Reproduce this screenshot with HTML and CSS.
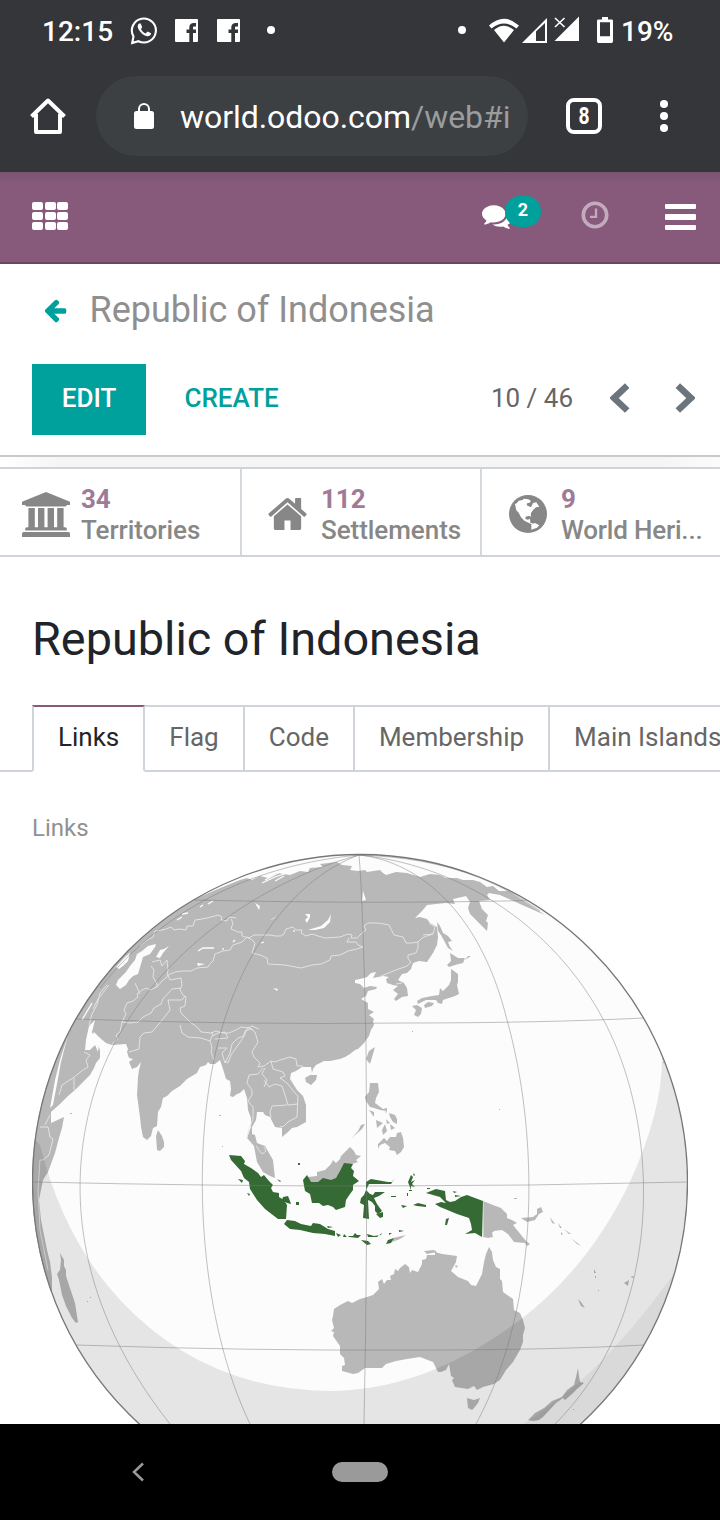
FILE: index.html
```html
<!DOCTYPE html>
<html lang="en">
<head>
<meta charset="utf-8">
<title>Republic of Indonesia</title>
<link rel="stylesheet" href="styles.css">
</head>
<body>
<div class="screen">
  <header class="status">
    <span class="time">12:15</span>
    <svg class="wa" width="28" height="29" viewBox="0 0 28 29"><path d="M2.200 27 3.500 20.500A12 12 0 1 1 8.500 25.200Z" fill="none" stroke="#fff" stroke-width="2.100"/><path d="M9 7.500C7 9 7.500 11.500 9 14c2 3.300 5 5.700 8 6.300 2 .3 4-1 4.200-3L17.500 15.500 15.700 17.500C13.500 16.500 12 15 11 13L12.200 11.200 10.700 7.500Z" fill="#fff"/></svg>
    <svg class="fb" width="23" height="23" viewBox="0 0 23 23"><path fill="#fff" d="M1 0H22a1 1 0 0 1 1 1V22a1 1 0 0 1-1 1H18V14H21V10.500H18V8.500Q18 7.500 19 7.500H21V4H19Q14.300 4 14.300 8.500V10.500H11.500V14H14.300V23H1a1 1 0 0 1-1-1V1a1 1 0 0 1 1-1Z"/></svg>
    <svg class="fb2" width="23" height="23" viewBox="0 0 23 23"><path fill="#fff" d="M1 0H22a1 1 0 0 1 1 1V22a1 1 0 0 1-1 1H18V14H21V10.500H18V8.500Q18 7.500 19 7.500H21V4H19Q14.300 4 14.300 8.500V10.500H11.500V14H14.300V23H1a1 1 0 0 1-1-1V1a1 1 0 0 1 1-1Z"/></svg>
    <i class="dot"></i>
    <div class="status-right">
      <i class="dot"></i>
      <svg class="signals" width="92" height="28" viewBox="0 0 92 28"><path d="M0 9.500Q15-4 30 9.500L27.500 12.500Q15 2.500 2.500 12.500Z" fill="#fff"/><path d="M5 14Q15 5.500 25 14L15 26.500Z" fill="#fff"/><path fill="#fff" fill-rule="evenodd" d="M33 27 58 2V27ZM47 15.500V25H56V7Z"/><path d="M65.500 25 90 0.500V25Z" fill="#fff"/><path d="M66 2 75.500 11M75.500 2 66 11" stroke="#fff" stroke-width="1.600"/></svg>
      <svg class="battery" width="16" height="26" viewBox="0 0 16 27" preserveAspectRatio="none"><path fill="#fff" fill-rule="evenodd" d="M5 0H11V2.500H14.500Q16 2.500 16 4V25Q16 27 14.500 27H1.500Q0 27 0 25V4Q0 2.500 1.500 2.500H5ZM3 5.500V20H13V5.500Z"/></svg>
      <span class="percent">19%</span>
    </div>
  </header>

  <div class="browser">
    <svg class="home" width="36" height="36" viewBox="0 0 36 36"><path d="M1.500 18.500 18 2.500 34.500 18.500M6 16V34H30V16" fill="none" stroke="#fff" stroke-width="4" stroke-linejoin="round"/></svg>
    <div class="address">
      <svg width="20" height="26" viewBox="0 0 20 26"><rect y="8" width="20" height="18" rx="2.500" fill="#fff"/><path d="M5 9V6a5 5 0 0 1 10 0V9" fill="none" stroke="#fff" stroke-width="2"/></svg>
      <span class="url">world.odoo.com<span>/web#i</span></span>
    </div>
    <div class="tabcount"><span>8</span></div>
    <div class="kebab"><i></i><i></i><i></i></div>
  </div>

  <nav class="navbar">
    <div class="apps"><i></i><i></i><i></i><i></i><i></i><i></i><i></i><i></i><i></i></div>
    <div class="chat">
      <svg width="30" height="30" viewBox="0 0 1792 1792"><path fill="#fff" d="M1408 768q0 139-94 257t-256.500 186.500-353.500 68.500q-86 0-176-16-124 88-278 128-36 9-86 16h-3q-11 0-20.500-8t-11.500-21q-1-3-1-6.500t.5-6.500 2-6l2.500-5 3.500-5.500 4-5 4.500-5 4-4.500q5-6 23-25t26-29.500 22.500-29 25-38.500 20.500-44q-124-72-195-177t-71-224q0-139 94-257t256.500-186.500 353.500-68.500 353.500 68.500 256.500 186.500 94 257zm384 256q0 120-71 224.500t-195 176.500q10 24 20.500 44t25 38.500 22.500 29 26 29.500 23 25q1 1 4 4.500t4.500 5 4 5 3.500 5.500l2.500 5 2 6 .5 6.500-1 6.500q-3 14-13 22t-22 7q-50-7-86-16-154-40-278-128-90 16-176 16-271 0-472-132 58 4 88 4 161 0 309-45t264-129q125-92 192-212t67-254q0-77-23-152 129 71 204 178t75 230z"/></svg>
      <span class="badge">2</span>
    </div>
    <svg class="clock" width="28" height="28" viewBox="0 0 28 28"><g fill="none" stroke="#c3abbd"><circle cx="14" cy="14" r="11.700" stroke-width="3.600"/><path d="M15 7.500V15.800H9" stroke-width="2.300"/></g></svg>
    <div class="menu"><i></i><i></i><i></i></div>
  </nav>

  <section class="control">
    <div class="crumb">
      <svg width="26" height="26" viewBox="0 0 1792 1792"><path fill="#00a09d" d="M1536 896v128q0 53-32.500 90.500t-84.500 37.500h-704l293 294q38 36 38 90t-38 90l-75 76q-37 37-90 37-52 0-91-37l-651-652q-37-37-37-90 0-52 37-91l651-650q38-38 91-38 52 0 90 38l75 74q38 38 38 91t-38 91l-293 293h704q52 0 84.500 37.500t32.500 90.500z"/></svg>
      <span>Republic of Indonesia</span>
    </div>
    <div class="actions">
      <button class="edit">EDIT</button>
      <button class="create">CREATE</button>
      <span class="pager">10 / 46</span>
      <svg class="prev" width="20" height="30" viewBox="0 0 20 30"><path d="M17.200 2.700 4 15 17.200 27.500" fill="none" stroke="#6c757d" stroke-width="6.500"/></svg>
      <svg class="next" width="20" height="30" viewBox="0 0 20 30"><path d="M2.800 2.700 16 15 2.800 27.500" fill="none" stroke="#6c757d" stroke-width="6.500"/></svg>
    </div>
  </section>

  <div class="shade"></div>
  <section class="stats">
    <div class="stat">
      <svg class="bank" width="48" height="45" viewBox="0 0 1920 1792"><path d="M960 0l960 384v128h-128q0 26-20.500 45t-48.500 19h-1526q-28 0-48.500-19t-20.500-45h-128v-128zm-704 640h256v768h128v-768h256v768h128v-768h256v768h128v-768h256v768h59q28 0 48.500 19t20.500 45v64h-1664v-64q0-26 20.500-45t48.500-19h59v-768zm1595 960q28 0 48.500 19t20.500 45v128h-1920v-128q0-26 20.500-45t48.500-19h1782z"/></svg>
      <p><b>34</b>Territories</p>
    </div>
    <div class="stat">
      <svg class="house" width="39" height="32" viewBox="73 253 1646 1283" preserveAspectRatio="none"><path d="M1472 992v480q0 26-19 45t-45 19h-384v-384h-256v384h-384q-26 0-45-19t-19-45v-480q0-1 .5-3t.5-3l575-474 575 474q1 2 1 6zm223-69l-62 74q-8 9-21 11h-3q-13 0-21-7l-692-577-692 577q-12 8-24 7-13-2-21-11l-62-74q-8-10-7-23.500t11-21.500l719-599q32-26 76-26t76 26l244 204v-195q0-14 9-23t23-9h192q14 0 23 9t9 23v408l219 182q10 8 11 21.500t-7 23.500z"/></svg>
      <p><b>112</b>Settlements</p>
    </div>
    <div class="stat">
      <svg class="world" width="38" height="38" viewBox="0 0 114 114"><circle cx="57" cy="57" r="57"/><path fill="#fff" d="M18 27 24 24 29 17 41 15 44 11 58 13 66 18 62 23 55 24 53 31 66 37 72 24 82 22 91 35 81 37 73 44 66 54 65 66 60 62 50 65 49 72 57 74 63 71 64 83 75 87 66 87 46 77 36 67 29 53 22 46ZM67 88 78 84 91 91 84 98 67 104Z"/></svg>
      <p><b>9</b>World Heri...</p>
    </div>
  </section>

  <main class="sheet">
    <h1>Republic of Indonesia</h1>
    <div class="tabs">
      <span class="tab active">Links</span><span class="tab">Flag</span><span class="tab">Code</span><span class="tab">Membership</span><span class="tab">Main Islands</span>
    </div>
    <div class="label">Links</div>
    <svg class="globe" width="656" height="572" viewBox="32 852 656 572">
      <defs><clipPath id="disc"><circle cx="360" cy="1182" r="328"/></clipPath></defs>
      <g clip-path="url(#disc)">
        <rect x="32" y="852" width="656" height="572" fill="#fcfcfc"/>
        <g fill="#b8b8b8">
          <path d="M240 880 247 878 252 880 260 876 268 878 277 873 290 875 300 871 308 872 310 868 323 867 320 864 337 862 342 865 352 866 350 870 358 871 365 870 367 872 380 870 383 873 386 875 396 872 407 873 420 877 430 874 440 875 446 878 457 878 463 880 473 880 480 882 487 887 493 886 499 891 508 891 530 905 545 915 520 904 500 895 489 893 487 895 490 900 479 901 482 909 488 915 486 921 488 923 487 931 478 922 470 914 468 908 470 902 466 896 462 897 453 899 455 904 446 903 436 904 427 905 422 911 415 918 420 917 427 919 430 923 437 927 438 937 437 945 433 953 427 962 419 961 413 963 411 969 407 973 402 974 398 980 404 983 407 988 408 996 402 997 396 1001 394 999 398 994 393 990 398 986 393 985 387 983 386 979 389 977 383 976 373 978 376 972 371 973 367 977 360 979 355 980 355 983 360 984 364 988 370 986 377 987 376 989 368 991 366 996 361 999 368 1003 368 1009 374 1012 369 1015 374 1019 373 1022 374 1025 371 1030 369 1036 364 1043 358 1049 355 1050 350 1054 345 1057 340 1059 330 1061 324 1061 316 1065 313 1069 312 1073 311 1067 302 1067 296 1071 291 1073 290 1079 297 1090 303 1096 306 1105 306 1122 297 1127 292 1128 288 1132 282 1137 282 1128 275 1127 270 1117 265 1115 263 1112 257 1112 256 1120 252 1127 252 1134 255 1135 257 1143 265 1146 273 1160 275 1178 270 1176 263 1172 257 1162 254 1146 247 1138 251 1127 251 1118 248 1110 247 1098 244 1089 240 1093 237 1094 233 1097 230 1096 231 1089 230 1081 226 1079 223 1069 220 1060 215 1064 210 1064 208 1062 206 1065 200 1067 197 1073 187 1079 180 1086 172 1091 167 1096 163 1098 161 1107 158 1112 157 1126 153 1128 151 1136 147 1140 143 1137 141 1127 140 1117 137 1095 138 1077 139 1070 141 1062 137 1067 132 1069 129 1062 133 1059 129 1058 127 1052 128 1049 126 1044 112 1045 106 1043 100 1038 94 1032 91 1038 93 1042 96 1040 100 1050 100 1058 96 1063 94 1068 90 1075 84 1081 75 1090 68 1096 60 1104 51 1112 51 1123 64 1117 62 1128 59 1138 55 1153 48 1172 43 1180 39 1200 41 1220 47 1250 50 1262 52 1277 52 1292 10 1292 20 1120 50 1030 120 940 197 898 225 886Z"/>
          <path d="M60 1253 64 1260 64 1266 66 1270 66 1276 70 1288 75 1303 78 1322 76 1323 72 1318 66 1306 62 1295 59 1280 57 1274 60 1270 61 1260ZM158 1130 162 1136 164 1142 164 1147 160 1151 157 1150 156 1136Z"/>
          <path d="M375 1047 373 1054 370 1064 366 1059 369 1051ZM305 1078 310 1075 317 1075 316 1080 311 1085 306 1082ZM437 922 440 926 443 933 448 936 452 941 448 942 450 947 453 951 448 948 441 935 438 931ZM450 953 458 958 465 958 463 963 455 965 449 967 447 965 451 961ZM465 960 468 956 471 956ZM471 955 474 952ZM451 969 454 971 458 974 458 982 457 985 459 994 455 996 449 998 443 1000 442 1004 438 1003 436 1000 426 1000 418 1004 417 1001 422 998 432 996 439 995 440 988 443 991 449 985 451 980ZM412 1006 417 1005 422 1008 421 1014 418 1017 414 1015 416 1010ZM424 1005 428 1002 434 1003 432 1006 425 1008Z"/>
          <path d="M370 1083 378 1083 379 1092 376 1098 375 1103 383 1109 387 1108 387 1111 380 1110 374 1108 370 1107 366 1101 365 1097 369 1092ZM369 1110 374 1112 374 1117ZM385 1108 387 1110 386 1114ZM376 1120 383 1123 377 1128ZM389 1113 395 1115 397 1119 397 1124 393 1122 390 1117ZM382 1130 385 1124 387 1131 383 1135ZM386 1119 390 1123 387 1124ZM390 1124 395 1128 391 1130ZM378 1149 378 1144 384 1138 387 1141 390 1137 396 1137 397 1133 401 1132 403 1138 404 1147 401 1152 397 1155 395 1151 389 1150 390 1147 385 1143 380 1145ZM351 1139 358 1131 361 1125 365 1124 362 1129 354 1136Z"/>
          <path d="M308 1177 317 1176 317 1172 325 1170 331 1164 333 1160 336 1163 340 1159 341 1156 346 1151 350 1147 354 1151 356 1155 361 1156 356 1160 358 1162 352 1164 344 1164 340 1173 335 1180 326 1180 320 1182 310 1182Z"/>
          <path d="M483 1201 493 1205 501 1208 507 1214 507 1218 512 1220 517 1223 513 1225 517 1230 526 1241 530 1244 527 1246 525 1243 514 1242 508 1234 502 1230 494 1231 492 1233 493 1237 488 1238 483 1237ZM521 1218 533 1217 537 1214 537 1209 541 1207 543 1212 539 1214 535 1220 527 1222ZM550 1217 555 1224 552 1223ZM558 1223 562 1228 560 1228ZM561 1232 563 1234 561 1235ZM564 1229 571 1234 569 1234ZM571 1238 581 1246 577 1244ZM393 1238 406 1235 400 1239 392 1242ZM514 1198h3v1h-3Z"/>
          <path d="M332 1320 333 1316 334 1309 340 1305 348 1301 352 1303 360 1299 367 1297 373 1295 379 1289 378 1282 382 1279 384 1284 387 1280 391 1280 390 1276 394 1274 395 1269 398 1271 400 1268 405 1264 409 1267 410 1273 412 1270 418 1272 422 1264 422 1260 426 1259 427 1255 435 1255 435 1252 442 1254 457 1256 456 1262 451 1271 458 1277 468 1281 471 1285 476 1286 482 1274 484 1262 486 1254 489 1247 492 1252 493 1260 496 1267 500 1269 500 1279 502 1281 503 1292 513 1299 514 1310 520 1313 523 1320 525 1328 523 1335 523 1342 520 1350 513 1362 506 1370 500 1380 494 1384 483 1387 477 1390 474 1386 468 1389 455 1387 452 1380 454 1378 451 1376 449 1364 446 1370 441 1372 438 1372 433 1362 420 1357 407 1359 396 1361 386 1364 382 1368 365 1368 358 1373 353 1374 342 1371 342 1366 345 1365 344 1358 340 1354 340 1346 333 1336 334 1332 331 1331 334 1328ZM467 1398 474 1400 480 1398 478 1403 474 1408 472 1410 468 1408ZM424 1251 434 1250 437 1252 427 1254ZM455 1265 458 1266 456 1268Z"/>
          <path d="M578 1368 579 1376 580 1382 584 1383 577 1389 572 1394 565 1400 563 1398 556 1403 543 1417 539 1420 533 1421 528 1420 535 1413 544 1408 552 1401 562 1397 567 1390 574 1385 576 1377ZM578 1299 581 1302 585 1308 581 1306ZM624 1283 629 1280 628 1286ZM594 1269 596 1273 594 1273ZM595 1276h1v2h-1ZM631 1276 635 1277 632 1278ZM598 1290h1v1h-1ZM573 1409h1v1h-1Z"/>
          <path d="M219 1115h2v1h-2ZM222 1146h1v1h-1ZM499 1109h1v1h-1ZM412 1031h1v1h-1ZM70 1113h2v1h-2ZM87 1301h1v1h-1ZM90 1297h1v1h-1ZM663 1062h1v1h-1Z"/>
        </g>
        <g fill="#fcfcfc">
          <path d="M156 944 148 946 142 951 137 954 135 960 130 966 126 972 118 980 116 985 120 989 126 985 129 980 133 976 138 974 141 964 143 957 150 954 155 947ZM130 953 125 957 116 967 119 969 123 966 128 961ZM169 946 164 949 160 950 156 957 160 958 163 953ZM95 1020 89 1026 86 1040 85 1050 90 1050 98 1042 100 1038 94 1037 92 1032ZM100 1037 95 1045 98 1052ZM68 1035 60 1060 55 1080 50 1108 53 1105 57 1084 61 1062ZM90 1000 80 1017 83 1012Z"/>
          <path d="M331 914 328 920 321 926 308 930 315 930 324 928 330 922ZM305 914 310 914 310 917 307 923 305 920 308 917ZM363 891 366 900 362 901ZM273 988 278 989 277 991ZM197 963 205 964 198 966ZM270 920 277 916 273 919ZM255 903 260 906 259 910ZM386 868 396 867 388 870Z"/>
        </g>
        <g fill="none" stroke="#fcfcfc" stroke-width="1.300"><path d="M198 951 203 948 214 948M92 1003 82 1020M262 883 275 877 290 872M265 880 278 873 298 866M275 881 284 876M208 904 213 901M200 907 203 905M177 920 182 917M182 914 188 913M233 942 235 940M223 950V948M294 930V932M261 943 264 942"/></g>
        <g fill="none" stroke="#e6e6e6" stroke-width=".9" stroke-linejoin="round">
          <path d="M140 946 147 940 153 937 155 931 162 930 166 929 171 927 174 930 179 929 186 930 187 926 193 926 195 920 202 919 207 918 215 916 218 915 222 917 221 920 227 921 229 917 236 918M231 919 233 923 231 929 238 932 242 932 242 936 249 938 254 935 263 935 270 935 275 936 281 936 284 934 286 929 293 927 296 930 302 930 301 933 306 936 312 934 318 936 325 938 340 937 348 934 352 935 351 938 357 938 361 934 366 930 364 926 368 923 377 923 384 924 389 925 394 935 403 937 406 943 412 943 418 942 422 938 427 936 433 934 435 927 429 923"/>
          <path d="M247 937 252 940 255 943 252 953 260 955 267 958 268 964 285 965 301 968 312 965 321 964 330 960 331 956 340 955 348 951 357 949 363 947 358 945 356 942 347 942 349 938M418 942 418 948 416 953 408 955 408 959 411 962 407 966 396 970 381 976"/>
          <path d="M247 937 242 942 233 945 230 950 223 951 215 954 213 961 209 965 208 967 197 968 191 971 182 971 175 972 168 975 170 980 181 978 182 985 180 990 183 995 186 997 185 1006 180 1008 181 1013 189 1021 198 1028 201 1032 212 1033 214 1036M211 1033 216 1031 223 1033 229 1033 238 1029 241 1027 249 1028 252 1026 259 1029"/>
          <path d="M151 966 154 970 153 977 157 984 157 987 150 990 147 988 142 990 137 994 138 997 133 1001 127 1003 124 1010 126 1014 122 1022 130 1023 138 1022 143 1017 151 1013 154 1008 161 1004 163 999 172 989 181 988M152 962 160 960 162 966 167 960 168 970 167 977 162 981 157 987M185 996 182 1000 168 1000 170 1010 163 1019 152 1032 144 1033 140 1037 139 1049 129 1052M122 1022 120 1032 116 1035 118 1039 112 1044M135 983 140 994M107 985 100 993 97 1005 92 1014 89 1025M109 985 98 999 93 1009M180 1025 182 1033 188 1037 201 1038 210 1041 212 1036 218 1033 225 1032 228 1038 215 1039M210 1041 212 1048 211 1052 214 1060M218 1048 227 1048 222 1053 225 1063 230 1053 232 1044 238 1038 244 1036 248 1027 253 1030"/>
          <path d="M225 1061 228 1063 231 1055 243 1038 245 1031 251 1029 255 1032 258 1042 252 1052 254 1057 260 1063 258 1067 264 1066 271 1061 275 1062 280 1060 290 1057 296 1059 297 1066 303 1066M271 1061 273 1069 283 1072 285 1076 280 1078 287 1083 295 1093 298 1096 297 1117 288 1122 284 1126 280 1127M263 1068 258 1074 249 1075 247 1083 252 1090 252 1095 248 1101 253 1107 253 1119 249 1129 247 1138M264 1080 269 1087 275 1084 282 1086 285 1095 288 1105 298 1104M287 1105 272 1106 270 1112 271 1118M265 1068 262 1074 267 1080 264 1087M256 1146 262 1154 266 1151 264 1147"/>
          <path d="M59 1095 62 1085 73 1078 83 1070 88 1067 86 1060 90 1055 84 1052M74 1078V1090M40 1127H48L50 1137 53 1139 49 1155 43 1160 40 1160 38 1190 40 1230 48 1270M50 1115 45 1125M396 984 402 983M423 935 433 934"/>
        </g>
        <path d="M483 1201V1237" stroke="#e6e6e6" stroke-width="1"/>
        <g fill="#366a34">
          <path d="M229 1155 241 1156 245 1161 244 1164 251 1168 258 1173 261 1177 264 1175 269 1181 273 1185 271 1188 273 1192 279 1193 279 1197 284 1200 287 1205 286 1219 278 1219 265 1209 257 1200 250 1189 249 1182 244 1178 241 1171 231 1160Z"/>
          <path d="M287 1220 295 1221 301 1224 311 1226 313 1223 320 1224 328 1229 335 1231 335 1236 325 1234 313 1233 300 1230 290 1229 284 1224ZM327 1226 333 1227 328 1228ZM336 1233 341 1235 338 1237ZM344 1234 347 1237 343 1237ZM348 1236 353 1236 355 1233 357 1235 361 1235 358 1238 349 1237ZM367 1234 374 1236 381 1235 382 1233 377 1237 368 1237ZM361 1240 368 1241 371 1244 367 1245ZM386 1244 388 1240 394 1238 391 1243ZM399 1230 404 1231 399 1232ZM389 1233 392 1233 389 1235Z"/>
          <path d="M303 1180 307 1175 310 1180 311 1182 318 1182 323 1178 331 1180 336 1178 340 1171 344 1163 353 1164 351 1168 354 1171 353 1176 359 1181 353 1185 353 1190 350 1194 346 1200 345 1207 336 1210 333 1207 328 1205 323 1206 319 1203 312 1203 310 1194 305 1191Z"/>
          <path d="M366 1190 366 1182 371 1179 388 1182 392 1182 395 1178 391 1184 384 1184 369 1184 366 1190 370 1194 373 1195 375 1192 385 1192 379 1196 374 1198 377 1204 382 1211 378 1214 375 1211 375 1206 372 1202 368 1200 369 1219 363 1218 364 1205 360 1203 361 1198 364 1195Z"/>
          <path d="M411 1175 413 1177 411 1182 415 1180 412 1184 415 1187 411 1186 411 1190 408 1182ZM414 1173 415 1176 413 1175ZM401 1205 407 1206 403 1208ZM413 1205 418 1203 426 1205 426 1207 417 1206ZM426 1193 436 1189 445 1191 446 1200 450 1202 455 1201 461 1197 467 1195 483 1201 482 1237 475 1233 465 1234 472 1230 471 1224 469 1218 457 1214 445 1209 440 1207 435 1204 441 1202 446 1203 440 1197ZM446 1219 449 1218 447 1225 445 1225ZM376 1214 383 1212 383 1217 380 1218ZM283 1197 288 1196 290 1201 291 1204 287 1203 282 1200ZM238 1179 243 1180 242 1183ZM247 1193 250 1194 249 1196ZM298 1163h2v2h-2ZM296 1202h3v3h-3ZM232 1170 235 1172ZM277 1179 281 1181 280 1182ZM409 1190h3v1h-3ZM391 1196h5v1h-5ZM453 1191 457 1192 454 1193ZM455 1195 461 1196 455 1197ZM427 1188h3v1h-3ZM407 1193h1v3h-1Z"/>
        </g>
        <path fill="#000" fill-opacity=".09" d="M0 1100 40 1145Q64 1240 121 1301 205 1390 330 1391C395 1390 455 1368 520 1320Q588 1268 629 1184 663 1110 662 1056L720 1050V1450H0Z"/>
        <path fill="#000" fill-opacity=".05" d="M685 1258Q643 1318 607 1355 572 1393 520 1426H710V1258Z"/>
      </g>
      <g fill="none" stroke="#777" stroke-opacity=".46" stroke-width="1">
        <path d="M194 900Q330 903 430 902T526 900M76 1019Q240 1025 405 1023 540 1023 644 1018M33 1182Q210 1186 370 1186 530 1186 687 1182M77 1345Q250 1351 420 1350 550 1350 644 1345"/>
        <path d="M359 855Q363 900 366 1045 368 1240 364 1424M359 855C410 860 478 902 507 1020 538 1130 543 1300 476 1424M359 855C470 866 570 938 615 1044 660 1150 660 1320 555 1424M359 855C240 887 125 980 92 1100 67 1190 76 1305 170 1424M359 855C285 882 230 970 212 1070 193 1170 200 1320 250 1424M359 855C250 865 160 912 100 988M359 855C450 858 500 883 540 911"/>
      </g>
      <circle cx="360" cy="1182" r="327.500" fill="none" stroke="#777" stroke-width="1.300"/>
    </svg>
  </main>

  <footer class="android">
    <svg width="14" height="20" viewBox="0 0 14 20"><path d="M12 1.500 3 10 12 18.500" fill="none" stroke="#999" stroke-width="2.500"/></svg>
    <i class="pill"></i>
  </footer>
</div>
</body>
</html>
```
FILE: styles.css
```css
* { box-sizing: border-box; }
body { margin: 0; background: #fff; font-family: Roboto, "Liberation Sans", sans-serif; font-size: 26px; }
svg, i { display: block; flex: none; }
.screen { width: 720px; height: 1520px; display: flex; flex-direction: column; overflow: hidden; }

.status { flex: none; height: 60px; background: #35363a; color: #fff; display: flex; align-items: center; padding: 0 47px 0 42px; font-size: 28px; font-weight: 500; white-space: nowrap; }
.time { width: 88px; padding-top: 2px; }
.fb { margin-left: 17px; }
.fb2 { margin-left: 19px; }
.dot { width: 8px; height: 8px; border-radius: 50%; background: #fff; }
.fb2 + .dot { margin-left: 27px; }
.status-right { margin-left: auto; display: flex; align-items: center; }
.signals { margin: 0 16px 0 23px; }
.battery { margin-right: 8px; }
.percent { padding-top: 2px; width: 52px; }

.browser { flex: none; height: 112px; background: #35363a; display: flex; align-items: center; padding: 0 52px 0 30px; }
.address { width: 432px; height: 80px; margin-left: 30px; border-radius: 40px; background: #3c4043; display: flex; align-items: center; padding-left: 38px; color: #fff; white-space: nowrap; }
.url { margin-left: 26px; font-size: 32px; letter-spacing: -.05px; padding-top: 2px; }
.url span { color: #9a9c9e; }
.tabcount { width: 36px; height: 36px; margin-left: 38px; border: 4px solid #fff; border-radius: 8px; color: #fff; font-size: 24px; line-height: 28px; font-weight: 700; text-align: center; }
.tabcount span { display: inline-block; transform: scaleX(.8); }
.kebab { margin-left: auto; display: flex; flex-direction: column; gap: 4px; }
.kebab i { width: 8px; height: 8px; border-radius: 50%; background: #fff; }

.navbar { flex: none; height: 92px; background: linear-gradient(#7a5570, #875a7b 12px); border-bottom: 2px solid #68465f; display: flex; align-items: center; padding: 0 24px 2px 32px; }
.apps { display: grid; grid-template-columns: repeat(3, 11px); gap: 2px 1.5px; }
.apps i { height: 8px; border-radius: 2px; background: #fff; }
.chat { margin-left: 414px; display: flex; align-items: center; }
.badge { position: relative; top: -5px; width: 36px; height: 31px; margin-left: -7px; border-radius: 15px; background: #00a09d; color: #fff; font-size: 18px; font-weight: 700; text-align: center; line-height: 28px; }
.clock { margin: -2px 0 0 39.500px; }
.menu { margin-left: auto; display: flex; flex-direction: column; gap: 5px; margin-top: 2px; }
.menu i { width: 31px; height: 5.300px; border-radius: 1px; background: #fff; }

.control { flex: none; height: 193px; border-bottom: 2px solid #c9cacb; }
.crumb { display: flex; align-items: center; height: 100px; padding: 0 0 8px 43.500px; font-size: 36px; color: #8f8f8f; }
.crumb span { margin-left: 20px; }
.actions { display: flex; align-items: center; height: 71px; padding: 0 25px 0 32px; }
.actions button { border: 0; background: none; padding: 0 0 4px; height: 71px; font: 500 26px Roboto, sans-serif; color: #00a09d; }
.actions .edit { width: 114px; background: #00a09d; color: #fff; }
.actions .create { margin-left: 38.500px; }
.pager { margin-left: auto; color: #666; padding-bottom: 4px; }
.actions svg { margin-bottom: 3px; }
.prev { margin-left: 37px; }
.next { margin-left: 45px; }

.shade { flex: none; height: 10px; background: linear-gradient(90deg, #fff 0, #f5f5f5 60px, #f5f5f5 660px, #fbfbfb); }
.stats { flex: none; display: flex; height: 90px; border-top: 2px solid #ced4da; border-bottom: 2px solid #ced4da; }
.stat { width: 240px; display: flex; align-items: center; fill: #878787; color: #878787; font-weight: 500; }
.stat + .stat { border-left: 2px solid #d5d9de; }
.stat p { margin: 5px 0 0; line-height: 31px; letter-spacing: -.05px; white-space: nowrap; }
.stat:last-child p { letter-spacing: -.2px; }
.stat b { display: block; color: #9f7b98; }
.bank { margin: 4px 11px 0 22px; }
.house { margin: 4px 14px 0 26px; }
.world { margin: 4px 14px 0 27px; }

.sheet { flex: 1; min-height: 0; background: #fff; overflow: hidden; }
.sheet h1 { margin: 0; padding: 51px 0 0 32px; height: 148px; font-size: 46.800px; line-height: 62px; font-weight: 400; color: #20242a; }
.tabs { display: flex; width: 900px; height: 67px; padding-left: 32px; box-shadow: inset 0 -2px #ced4da; }
.tab { height: 67px; padding: 13px 24px 0; border: solid #ced4da; border-width: 2px 2px 2px 0; line-height: 34px; color: #666; }
.tab.active { border-left-width: 2px; border-top-color: #875a7b; border-bottom-color: #fff; color: #20242a; }
.label { height: 80px; padding: 42px 0 0 32px; font-size: 24px; line-height: 28px; color: #919191; }
.globe { margin-left: 32px; }

.android { flex: none; height: 96px; background: #000; display: flex; align-items: center; padding-left: 131px; }
.pill { width: 56px; height: 20px; border-radius: 10px; margin-left: 187px; background: #9a9a9a; }
```
